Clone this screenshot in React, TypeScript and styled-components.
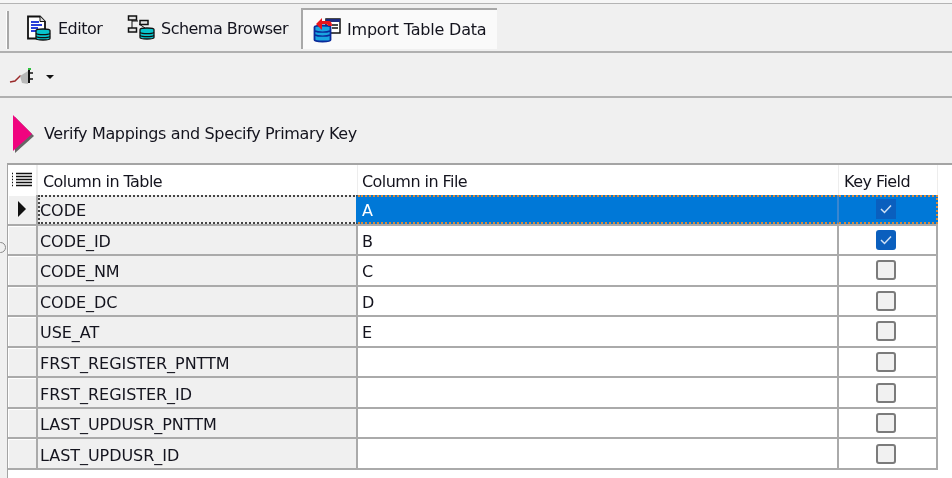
import * as React from 'react';
import styled, { createGlobalStyle } from 'styled-components';

const GlobalStyle = createGlobalStyle`
  html, body {
    margin: 0;
    padding: 0;
    background: #f0f0f0;
  }
  #root {
    width: 952px;
    height: 478px;
    overflow: hidden;
  }
`;

const Page = styled.div`
  position: relative;
  width: 952px;
  height: 478px;
  overflow: hidden;
  display: flex;
  flex-direction: column;
  background: #f0f0f0;
  color: #14141e;
  font-family: 'DejaVu Sans', Tahoma, sans-serif;
  font-size: 16px;
  letter-spacing: -0.36px;
  filter: blur(0.3px);
`;

const TopEdge = styled.div`
  height: 3px;
  flex: none;
  border-bottom: 1px solid #b4b4b4;
  background: #f6f6f6;
`;

const TabBar = styled.div`
  height: 49px;
  flex: none;
  display: flex;
  align-items: flex-end;
  padding-left: 6px;
  padding-bottom: 2px;
  border-bottom: 2px solid #b0b0b0;
  box-sizing: border-box;
`;

const Grip = styled.div`
  width: 3px;
  height: 38px;
  margin-right: 17px;
  border-left: 1px solid #fff;
  border-right: 2px solid #a8a8a8;
  box-sizing: border-box;
`;

const Tab = styled.div<{ $active?: boolean; $width: number }>`
  width: ${(p) => p.$width}px;
  height: ${(p) => (p.$active ? 41 : 40)}px;
  box-sizing: border-box;
  display: flex;
  align-items: center;
  gap: 6px;
  white-space: nowrap;
  padding-left: ${(p) => (p.$active ? 10 : 0)}px;
  padding-bottom: ${(p) => (p.$active ? 0 : 2)}px;
  letter-spacing: ${(p) => (p.$active ? -0.2 : -0.52)}px;
  background: ${(p) => (p.$active ? '#fafafa' : 'transparent')};
  border-top: ${(p) => (p.$active ? '2px solid #a8a8a8' : '0')};
  border-left: ${(p) => (p.$active ? '2px solid #a8a8a8' : '0')};
`;

const Toolbar = styled.div`
  height: 45px;
  flex: none;
  display: flex;
  align-items: center;
  gap: 9px;
  padding-left: 9px;
  padding-top: 4px;
  box-sizing: border-box;
  border-bottom: 2px solid #b0b0b0;
`;

const DropArrow = styled.div`
  width: 0;
  height: 0;
  border-left: 4px solid transparent;
  border-right: 4px solid transparent;
  border-top: 4px solid #111;
`;

const StepHeader = styled.div`
  height: 65px;
  flex: none;
  display: flex;
  align-items: center;
  gap: 9px;
  padding-left: 12px;
  padding-top: 6px;
  box-sizing: border-box;
`;

const Grid = styled.div`
  flex: 1;
  margin-left: 7px;
  background: #fff;
  border-top: 2px solid #a4a4a4;
  border-left: 1px solid #a4a4a4;
`;

const Row = styled.div<{ $header?: boolean }>`
  display: grid;
  grid-template-columns: 30px 320px 481px 99px;
  width: 930px;
  box-sizing: border-box;
  height: ${(p) => (p.$header ? 30 : 30.56)}px;
  border-bottom: ${(p) => (p.$header ? '0' : '2px solid #aaa')};
`;

const Indicator = styled.div<{ $header?: boolean }>`
  display: flex;
  align-items: center;
  justify-content: center;
  background: ${(p) => (p.$header ? '#fff' : '#f0f0f0')};
  border-right: 2px solid ${(p) => (p.$header ? '#ededed' : '#aaa')};
  box-shadow: ${(p) => (p.$header ? 'none' : 'inset 1px 1px 0 #fff')};
`;

const HeaderCell = styled.div<{ $pad: number }>`
  display: flex;
  align-items: center;
  padding-left: ${(p) => p.$pad}px;
  padding-top: 3px;
  letter-spacing: -0.55px;
  border-right: 1px solid #ededed;
  background: #fff;
`;

const NameCell = styled.div<{ $focused?: boolean }>`
  display: flex;
  align-items: center;
  padding-left: ${(p) => (p.$focused ? 0 : 2)}px;
  padding-top: 3px;
  letter-spacing: -0.05px;
  background: #f0f0f0;
  border-right: 2px solid ${(p) => (p.$focused ? '#0078d7' : '#aaa')};
  border-top: ${(p) => (p.$focused ? '2px dotted #444' : '0')};
  border-bottom: ${(p) => (p.$focused ? '2px dotted #444' : '0')};
  border-left: ${(p) => (p.$focused ? '2px dotted #444' : '0')};
`;

const FileCell = styled.div<{ $selected?: boolean }>`
  display: flex;
  align-items: center;
  padding-left: 4px;
  padding-top: 3px;
  background: ${(p) => (p.$selected ? '#0078d7' : '#fff')};
  color: ${(p) => (p.$selected ? '#fff' : 'inherit')};
  border-right: 2px solid ${(p) => (p.$selected ? '#3a86d0' : '#aaa')};
  border-top: ${(p) => (p.$selected ? '2px dotted #d98a3a' : '0')};
  border-bottom: ${(p) => (p.$selected ? '2px dotted #d98a3a' : '0')};
`;

const KeyCell = styled.div<{ $selected?: boolean }>`
  display: flex;
  align-items: center;
  justify-content: center;
  padding-right: 3px;
  box-sizing: border-box;
  background: ${(p) => (p.$selected ? '#0078d7' : '#fff')};
  border-right: 2px ${(p) => (p.$selected ? 'dotted #d98a3a' : 'solid #aaa')};
  border-top: ${(p) => (p.$selected ? '2px dotted #d98a3a' : '0')};
  border-bottom: ${(p) => (p.$selected ? '2px dotted #d98a3a' : '0')};
`;

const CheckBox = styled.div<{ $checked?: boolean; $selected?: boolean }>`
  width: 20px;
  height: 20px;
  box-sizing: border-box;
  border-radius: ${(p) => (p.$selected ? 0 : 3)}px;
  display: flex;
  align-items: center;
  justify-content: center;
  background: ${(p) => (p.$checked ? '#0a5fbe' : '#f1f1f1')};
  border: ${(p) => (p.$checked ? '0' : '2px solid #7b7b7b')};
`;

const EdgeMark = styled.div`
  position: absolute;
  left: -5px;
  top: 242px;
  width: 9px;
  height: 9px;
  border: 1px solid #8a8a8a;
  border-radius: 50%;
`;

const EditorIcon = () => (
  <svg width="26" height="26" viewBox="0 0 26 26">
    <path d="M2 1.500h12l5 5v17H2z" fill="#fff" stroke="#111" strokeWidth="1.800" />
    <path d="M14 1.500v5h5" fill="#ddd" stroke="#111" />
    <path d="M5 7h8M5 10h11M5 13h7M5 16h5" stroke="#2a3fd8" strokeWidth="1.800" />
    <path d="M10 15.500c0-2 14-2 14 0v8c0 2-14 2-14 0z" fill="#08c4cc" stroke="#111" strokeWidth="1.300" />
    <path d="M10 18.500c2 1.500 12 1.500 14 0M10 21.500c2 1.500 12 1.500 14 0" fill="none" stroke="#111" strokeWidth="1.200" />
  </svg>
);

const SchemaIcon = () => (
  <svg width="28" height="26" viewBox="0 0 28 26">
    <path d="M5 5v12M5 6h6M5 16h5M12 9l6 4" stroke="#111" fill="none" />
    <rect x="1.500" y="1" width="8" height="4" fill="#e4e4e4" stroke="#111" strokeWidth="1.500" />
    <rect x="13" y="5.500" width="8" height="4" fill="#e4e4e4" stroke="#111" strokeWidth="1.500" />
    <rect x="1.500" y="13" width="8" height="4" fill="#e4e4e4" stroke="#111" strokeWidth="1.500" />
    <path d="M13 14.500c0-2 14-2 14 0v8c0 2-14 2-14 0z" fill="#08c4cc" stroke="#111" strokeWidth="1.300" />
    <path d="M13 17.500c2 1.500 12 1.500 14 0M13 20.500c2 1.500 12 1.500 14 0" fill="none" stroke="#111" strokeWidth="1.200" />
  </svg>
);

const ImportIcon = () => (
  <svg width="28" height="26" viewBox="0 0 28 26">
    <rect x="13" y="2" width="14" height="14" fill="#fff" stroke="#111" strokeWidth="1.500" />
    <rect x="13" y="2" width="14" height="3" fill="#1c2a80" />
    <path d="M19 8h6M19 11h6" stroke="#111" strokeWidth="1.300" />
    <path d="M1.500 10c0-2 16-2 16 0v13c0 2-16 2-16 0z" fill="#19a5e0" stroke="#0a2a9a" strokeWidth="1.800" />
    <path d="M2 14c3 1.500 12 1.500 15 0M2 18c3 1.500 12 1.500 15 0" fill="none" stroke="#0a2a9a" strokeWidth="1.400" />
    <path d="M3 7l6-6v3h7c2 0 3 2 3 5h-4c0-1-.5-2-2-2H9v6z" fill="#e8141c" />
  </svg>
);

const PlugIcon = () => (
  <svg width="28" height="20" viewBox="0 0 28 20">
    <path d="M1 15l5-1 5-5 3 1" fill="none" stroke="#9a2a2a" strokeWidth="1.500" />
    <path d="M11 9l8-5v13l-6-1z" fill="#b8b8b8" />
    <path d="M20 3v13" stroke="#111" strokeWidth="2" />
    <path d="M20 6h4M20 12h4" stroke="#111" strokeWidth="1.500" />
    <path d="M19 1h3v2h-3z" fill="#2fbf3f" />
  </svg>
);

const StepArrow = () => (
  <svg width="23" height="40" viewBox="0 0 23 40">
    <path d="M3 3l19 19L3 39z" fill="#666" />
    <path d="M1 1l19 19L1 37z" fill="#f0047f" />
  </svg>
);

const ListIcon = () => (
  <svg width="22" height="16" viewBox="0 0 22 16">
    <path d="M5 1.500h16M5 4.500h16M5 7.500h16M5 10.500h16M5 13.500h16" stroke="#111" strokeWidth="1.500" />
    <path d="M1 1.500h2M1 4.500h2M1 7.500h2M1 10.500h2M1 13.500h2" stroke="#111" strokeWidth="1.500" strokeDasharray="1 1" />
  </svg>
);

const RowMarker = () => (
  <svg width="10" height="16" viewBox="0 0 10 16">
    <path d="M1 0l8 8-8 8z" fill="#111" />
  </svg>
);

const CheckMark = () => (
  <svg width="14" height="12" viewBox="0 0 14 12">
    <path d="M2 6l3.500 3.500L12 2.500" fill="none" stroke="#cfe0f5" strokeWidth="1.500" />
  </svg>
);

const rows = [
  { name: 'CODE', file: 'A', checked: true },
  { name: 'CODE_ID', file: 'B', checked: true },
  { name: 'CODE_NM', file: 'C' },
  { name: 'CODE_DC', file: 'D' },
  { name: 'USE_AT', file: 'E' },
  { name: 'FRST_REGISTER_PNTTM', file: '' },
  { name: 'FRST_REGISTER_ID', file: '' },
  { name: 'LAST_UPDUSR_PNTTM', file: '' },
  { name: 'LAST_UPDUSR_ID', file: '' },
];

export default function App() {
  return (
    <Page>
      <GlobalStyle />
      <TopEdge />
      <TabBar>
        <Grip />
        <Tab $width={101}>
          <EditorIcon />
          Editor
        </Tab>
        <Tab $width={174}>
          <SchemaIcon />
          Schema Browser
        </Tab>
        <Tab $active $width={196}>
          <ImportIcon />
          Import Table Data
        </Tab>
      </TabBar>
      <Toolbar>
        <PlugIcon />
        <DropArrow />
      </Toolbar>
      <StepHeader>
        <StepArrow />
        Verify Mappings and Specify Primary Key
      </StepHeader>
      <Grid>
        <Row $header>
          <Indicator $header>
            <ListIcon />
          </Indicator>
          <HeaderCell $pad={5}>Column in Table</HeaderCell>
          <HeaderCell $pad={4}>Column in File</HeaderCell>
          <HeaderCell $pad={5}>Key Field</HeaderCell>
        </Row>
        {rows.map((row, i) => (
          <Row key={row.name}>
            <Indicator>{i === 0 && <RowMarker />}</Indicator>
            <NameCell $focused={i === 0}>{row.name}</NameCell>
            <FileCell $selected={i === 0}>{row.file}</FileCell>
            <KeyCell $selected={i === 0}>
              <CheckBox $checked={row.checked} $selected={i === 0}>
                {row.checked && <CheckMark />}
              </CheckBox>
            </KeyCell>
          </Row>
        ))}
      </Grid>
      <EdgeMark />
    </Page>
  );
}
